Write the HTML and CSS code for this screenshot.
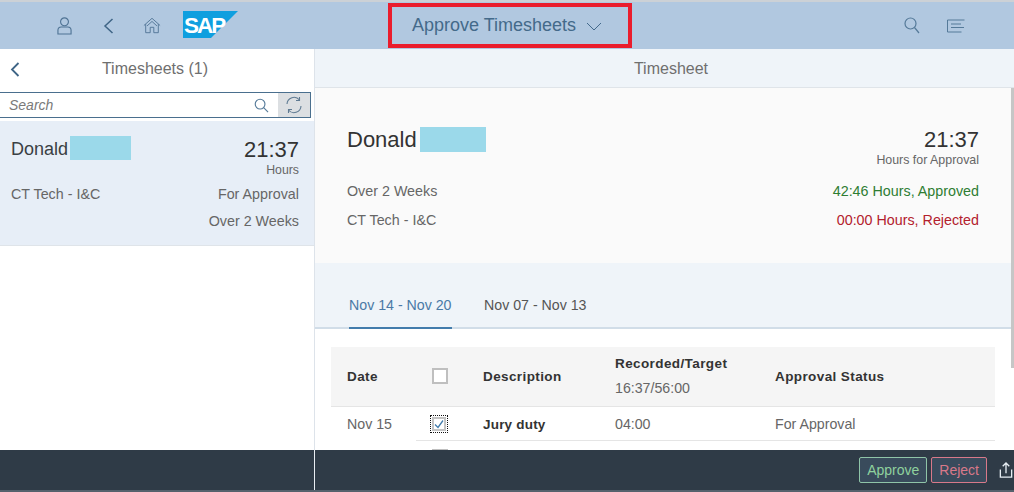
FILE: index.html
```html
<!DOCTYPE html>
<html lang="en">
<head>
<meta charset="utf-8">
<title>Approve Timesheets</title>
<link rel="stylesheet" href="styles.css">
</head>
<body>
<div class="app">
  <header class="shell">
    <div class="shell-left">
      <svg class="ic user" viewBox="0 0 16 20"><circle cx="8" cy="5.500" r="4.200"/><path d="M1 18.500v-4c0-2 1.500-3.500 3.500-3.500h7c2 0 3.500 1.500 3.500 3.500v4z"/></svg>
      <svg class="ic back" viewBox="0 0 11 16"><path d="M9.500 1L2 8l7.500 7"/></svg>
      <svg class="ic home" viewBox="0 0 20 18"><path d="M1 9l9-8 9 8M3 7.500V17h5v-6h4v6h5V7.500"/><path d="M4.500 9.500L10 4.500l5.500 5"/></svg>
      <svg class="logo" viewBox="0 0 55 27"><polygon class="logo-bg" points="0,0 55,0 28,27 0,27"/><text class="logo-text" x="1" y="22">SAP</text></svg>
    </div>
    <div class="shell-title">
      <span>Approve Timesheets</span>
      <svg class="ic chev" viewBox="0 0 16 9"><path d="M1 1l7 7 7-7"/></svg>
    </div>
    <div class="shell-right">
      <svg class="ic search-lg" viewBox="0 0 16 17"><circle cx="6.500" cy="6.500" r="5.500"/><path d="M10.500 10.500l4.500 5.500"/></svg>
      <svg class="ic menu" viewBox="0 0 18 14"><path d="M.5 13V1h17M4 5h10M4 8.500h13M.5 13h14"/></svg>
    </div>
  </header>

  <main class="content">
    <aside class="master">
      <div class="bar master-bar">
        <svg class="ic nav-back" viewBox="0 0 10 15"><path d="M8.500 1L2 7.500 8.500 14"/></svg>
        <span class="bar-title">Timesheets (1)</span>
      </div>
      <div class="searchbox">
        <span class="placeholder">Search</span>
        <svg class="ic search-sm" viewBox="0 0 16 16"><circle cx="6.500" cy="6.500" r="5.200"/><path d="M10.300 10.300L15 15"/></svg>
        <span class="refresh">
          <svg class="ic refresh-ic" viewBox="0 0 18 18"><path d="M2 8a7 7 0 0 1 12.500-4M14.500 1v3.500H11M16 10a7 7 0 0 1-12.500 4M3.500 17v-3.500H7"/></svg>
        </span>
      </div>
      <div class="item">
        <div class="item-row item-top">
          <div class="person person-item"><span class="person-name">Donald</span><span class="mask mask-sm"></span></div>
          <div class="item-hours">21:37</div>
        </div>
        <div class="item-unit">Hours</div>
        <div class="item-row item-info"><span>CT Tech - I&amp;C</span><span>For Approval</span></div>
        <div class="item-row item-info item-last"><span></span><span>Over 2 Weeks</span></div>
      </div>
    </aside>

    <section class="detail">
      <div class="bar detail-bar"><span class="bar-title">Timesheet</span></div>
      <div class="scroll">
        <div class="summary">
          <div class="sum-row sum-top">
            <div class="person"><span class="sum-name">Donald</span><span class="mask mask-lg"></span></div>
            <div class="sum-hours">21:37</div>
          </div>
          <div class="sum-unit">Hours for Approval</div>
          <div class="sum-row sum-a"><span>Over 2 Weeks</span><span class="ok">42:46 Hours, Approved</span></div>
          <div class="sum-row sum-b"><span>CT Tech - I&amp;C</span><span class="bad">00:00 Hours, Rejected</span></div>
        </div>
        <div class="tabs">
          <span class="tab tab-on">Nov 14 - Nov 20</span>
          <span class="tab">Nov 07 - Nov 13</span>
        </div>
        <div class="table-wrap">
          <div class="t-row t-head">
            <div class="c-date">Date</div>
            <div class="c-check"><span class="box"></span></div>
            <div class="c-desc">Description</div>
            <div class="c-rec">Recorded/Target<small>16:37/56:00</small></div>
            <div class="c-status">Approval Status</div>
          </div>
          <div class="t-row t-body">
            <div class="c-date">Nov 15</div>
            <div class="c-check"><span class="focus"><span class="box box-on"><svg class="tick" viewBox="0 0 10 9"><path d="M1 5l3 3 5-7"/></svg></span></span></div>
            <div class="c-desc strong">Jury duty</div>
            <div class="c-rec">04:00</div>
            <div class="c-status">For Approval</div>
          </div>
          <div class="t-row t-next">
            <div class="c-date"></div>
            <div class="c-check"><span class="box"></span></div>
          </div>
        </div>
        <span class="thumb"></span>
      </div>
    </section>
  </main>

  <footer class="footer">
    <div class="foot-left"></div>
    <div class="foot-right">
      <button class="btn btn-ok">Approve</button>
      <button class="btn btn-no">Reject</button>
      <svg class="ic share" viewBox="0 0 14 17"><path d="M1 8v8h12V8M7 12V1M3.500 4.500L7 1l3.500 3.500"/></svg>
    </div>
  </footer>
</div>
</body>
</html>
```
FILE: styles.css
```css
* { box-sizing: border-box; }
html, body { margin: 0; height: 100%; background: #fff; overflow: hidden; }
body { font-family: "Liberation Sans", Arial, sans-serif; color: #666; }
.app { width: 1014px; height: 492px; display: flex; flex-direction: column; overflow: hidden; }

.ic { fill: none; stroke: #436a8c; stroke-width: 1.2; flex: none; display: block; }

.shell { height: 49px; flex: none; background: #b1c8e0; border-top: 2px solid #ccd1d6; display: flex; position: relative; align-items: center; }
.shell-left { display: flex; align-items: center; padding-left: 57px; width: 388px; }
.user { width: 15px; height: 20px; margin-right: 31px; stroke: #4f7394; }
.back { width: 11px; height: 16px; margin-right: 29px; stroke: #3f6586; stroke-width: 1.5; }
.home { width: 18px; height: 17px; margin-right: 22px; stroke: #4f7394; stroke-width: 1; }
.logo { width: 55px; height: 27px; margin-top: -3px; display: block; }
.logo-bg { fill: #0f9fdf; }
.logo-text { fill: #fff; font: bold 22.500px "Liberation Sans", sans-serif; letter-spacing: -2px; }

.shell-title { width: 244px; height: 45px; margin-top: 0; border: 4px solid #ea1c2c; display: flex; align-items: center; padding: 0 0 1px 20px; color: #446a8a; font-size: 18px; }
.chev { width: 16px; height: 9px; margin-left: 10px; margin-top: 2px; stroke-width: 1; }

.shell-right { display: flex; align-items: center; padding-left: 272px; }
.search-lg { width: 16px; height: 17px; margin-right: 27px; stroke: #557a99; }
.menu { width: 18px; height: 14px; stroke: #557a99; stroke-width: 1; }

.content { flex: 1; min-height: 0; display: flex; }
.master { width: 315px; flex: none; border-right: 1px solid #dde3ea; background: #fff; }
.detail { flex: 1; min-width: 0; display: flex; flex-direction: column; }

.bar { height: 39px; flex: none; display: flex; align-items: center; justify-content: center; position: relative; border-bottom: 1px solid #dfe4e9; background: #eff4f9; }
.master-bar { height: 39px; background: #fff; border-bottom: 0; padding-right: 4px; }
.detail-bar { padding: 1px 0 0 13px; }
.bar-title { font-size: 16px; color: #6f6f6f; }
.nav-back { width: 10px; height: 15px; position: absolute; left: 10px; top: 13px; stroke-width: 1.8; stroke: #3f6586; }

.searchbox { height: 26px; margin: 4px 3px 0 0; border: 1px solid #4a6f8e; border-left: 0; display: flex; align-items: center; background: #fff; }
.placeholder { flex: 1; padding-left: 9px; font-size: 14px; font-style: italic; color: #7a7a7a; }
.search-sm { width: 15px; height: 15px; margin-right: 9px; stroke: #557a99; }
.refresh { width: 32px; height: 24px; background: #dcdfe2; display: flex; align-items: center; justify-content: center; }
.refresh-ic { width: 18px; height: 18px; stroke: #5f7a92; stroke-width: 1.1; }

.item { height: 125px; margin-top: 3px; background: #e7eef7; border-bottom: 1px solid #dfe4e9; padding: 15px 15px 0 11px; }
.item-row { display: flex; justify-content: space-between; }
.item-top { align-items: flex-start; }
.person { display: flex; align-items: center; }
.person-item { align-items: flex-start; }
.person-name { font-size: 18px; color: #3a3f44; margin-top: 3px; }
.mask { display: block; background: #9bd9ea; }
.mask-sm { width: 61px; height: 24px; margin-left: 2px; }
.mask-lg { width: 66px; height: 25px; margin-left: 3px; margin-top: -2px; }
.item-hours { font-size: 22px; color: #333; line-height: 28px; }
.item-unit { text-align: right; font-size: 12.300px; color: #666; line-height: 14px; margin-top: -1px; }
.item-info { font-size: 14.300px; color: #666; line-height: 27px; margin-top: 4px; }
.item-info + .item-info { margin-top: 0; }

.scroll { flex: 1; min-height: 0; position: relative; overflow: hidden; background: #fff; }
.summary { height: 175px; background: #fafafa; padding: 38px 35px 0 32px; }
.sum-row { display: flex; justify-content: space-between; }
.sum-top { align-items: center; height: 28px; }
.sum-name { font-size: 22px; color: #333; }
.sum-hours { font-size: 22px; color: #333; }
.sum-unit { text-align: right; font-size: 12.400px; color: #666; line-height: 14px; margin-top: -1px; }
.sum-a, .sum-b { font-size: 14.300px; line-height: 29px; }
.sum-a { margin-top: 10px; }
.ok { color: #2e7d32; }
.bad { color: #b3202c; }

.tabs { height: 66px; background: #eff4f9; border-bottom: 2px solid #d1dde8; padding-left: 34px; display: flex; align-items: flex-end; gap: 32px; }
.tab { font-size: 14.200px; color: #555; height: 37px; line-height: 26px; margin-bottom: -2px; min-width: 103px; }
.tab-on { color: #4a7aa6; border-bottom: 2px solid #427cac; }

.table-wrap { padding: 18px 19px 0 16px; }
.t-row { display: flex; font-size: 14.200px; color: #666; }
.t-head { height: 60px; background: #f5f5f5; align-items: center; border-bottom: 1px solid #e5e5e5; color: #333; font-weight: bold; font-size: 13.500px; letter-spacing: .4px; }
.t-head .c-rec { margin-top: -2px; }
.t-head .box { margin-top: -2px; }
.t-body { height: 34px; align-items: center; position: relative; }
.t-body::after { content: ""; position: absolute; left: 85px; right: 0; bottom: 0; height: 1px; background: #e5e5e5; }
.c-date { width: 85px; padding-left: 16px; flex: none; }
.c-check { width: 67px; padding-left: 16px; flex: none; display: flex; align-items: center; }
.c-desc { width: 132px; flex: none; }
.c-rec { width: 160px; flex: none; }
.c-rec small { display: block; font-size: 14.200px; font-weight: normal; color: #666; letter-spacing: 0; margin-top: 9px; }
.c-status { flex: 1; }
.strong { font-weight: bold; color: #333; letter-spacing: .2px; font-size: 13.500px; }
.box { display: block; width: 16px; height: 16px; border: 2px solid #bfbfbf; background: #fff; }
.focus { display: block; outline: 1px dotted #111; margin: -1px; padding: 1px; }
.box-on { width: 14px; height: 14px; border-color: #c4c4c4; }
.tick { display: block; width: 10px; height: 10px; fill: none; stroke: #427cac; stroke-width: 1.3; }
.t-next { padding-top: 8px; }
.thumb { position: absolute; right: 0; top: 0; width: 3px; height: 280px; background: #c6c6c6; }

.footer { height: 42px; flex: none; display: flex; background: #2f3b47; border-bottom: 2px solid #55616c; }
.foot-left { width: 315px; border-right: 1px solid #e8edf2; }
.foot-right { flex: 1; display: flex; align-items: center; justify-content: flex-end; }
.btn { height: 26px; padding: 0 7px; margin-right: 4px; border-radius: 2px; font: 14px "Liberation Sans", Arial, sans-serif; background: #394b5c; }
.btn-ok { border: 1px solid #8fc4a8; color: #8fd19e; }
.btn-no { border: 1px solid #d8798a; color: #d8798a; margin-right: 12px; }
.share { width: 14px; height: 16px; stroke: #e6edf3; margin-right: 1px; stroke-width: 1.400; }
```
